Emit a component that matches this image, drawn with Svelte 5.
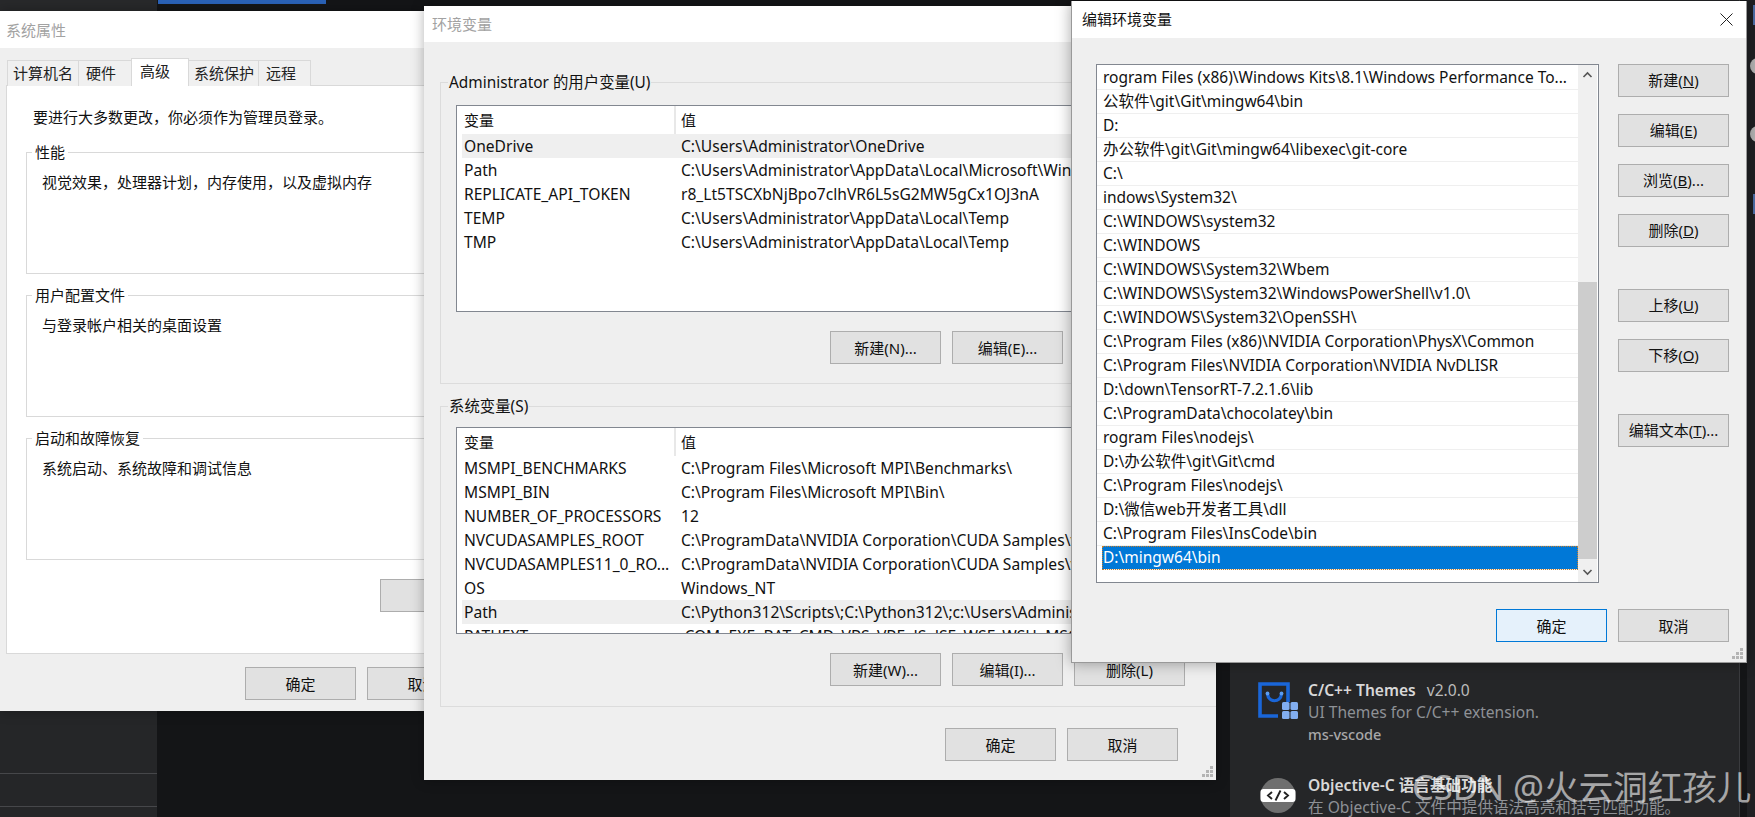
<script>
	const userVars = [
		['OneDrive', 'C:\\Users\\Administrator\\OneDrive', true],
		['Path', 'C:\\Users\\Administrator\\AppData\\Local\\Microsoft\\WindowsApps;C:\\Users'],
		['REPLICATE_API_TOKEN', 'r8_Lt5TSCXbNjBpo7clhVR6L5sG2MW5gCx1OJ3nA'],
		['TEMP', 'C:\\Users\\Administrator\\AppData\\Local\\Temp'],
		['TMP', 'C:\\Users\\Administrator\\AppData\\Local\\Temp']
	];
	const sysVars = [
		['MSMPI_BENCHMARKS', 'C:\\Program Files\\Microsoft MPI\\Benchmarks\\'],
		['MSMPI_BIN', 'C:\\Program Files\\Microsoft MPI\\Bin\\'],
		['NUMBER_OF_PROCESSORS', '12'],
		['NVCUDASAMPLES_ROOT', 'C:\\ProgramData\\NVIDIA Corporation\\CUDA Samples\\v11.0'],
		['NVCUDASAMPLES11_0_RO...', 'C:\\ProgramData\\NVIDIA Corporation\\CUDA Samples\\v11.0'],
		['OS', 'Windows_NT'],
		['Path', 'C:\\Python312\\Scripts\\;C:\\Python312\\;c:\\Users\\Administrator', true],
		['PATHEXT', '.COM;.EXE;.BAT;.CMD;.VBS;.VBE;.JS;.JSE;.WSF;.WSH;.MSC']
	];
	const paths = [
		'rogram Files (x86)\\Windows Kits\\8.1\\Windows Performance To...',
		'公软件\\git\\Git\\mingw64\\bin',
		'D:',
		'办公软件\\git\\Git\\mingw64\\libexec\\git-core',
		'C:\\',
		'indows\\System32\\',
		'C:\\WINDOWS\\system32',
		'C:\\WINDOWS',
		'C:\\WINDOWS\\System32\\Wbem',
		'C:\\WINDOWS\\System32\\WindowsPowerShell\\v1.0\\',
		'C:\\WINDOWS\\System32\\OpenSSH\\',
		'C:\\Program Files (x86)\\NVIDIA Corporation\\PhysX\\Common',
		'C:\\Program Files\\NVIDIA Corporation\\NVIDIA NvDLISR',
		'D:\\down\\TensorRT-7.2.1.6\\lib',
		'C:\\ProgramData\\chocolatey\\bin',
		'rogram Files\\nodejs\\',
		'D:\\办公软件\\git\\Git\\cmd',
		'C:\\Program Files\\nodejs\\',
		'D:\\微信web开发者工具\\dll',
		'C:\\Program Files\\InsCode\\bin',
		'D:\\mingw64\\bin'
	];
	const tabs = ['计算机名', '硬件', '高级', '系统保护', '远程'];
</script>

{#snippet varList(rows)}
	<div class="list">
		<div class="row head"><span class="name">变量</span><span class="val">值</span></div>
		{#each rows as r}
			<div class="row" class:hot={r[2]}><span class="name">{r[0]}</span><span class="val">{r[1]}</span></div>
		{/each}
	</div>
{/snippet}

{#snippet grip()}
	<svg class="grip" width="12" height="12" viewBox="0 0 12 12" fill="#b4b4b4">
		<rect x="8" y="0" width="3" height="3" /><rect x="4" y="4" width="3" height="3" /><rect x="8" y="4" width="3" height="3" />
		<rect x="0" y="8" width="3" height="3" /><rect x="4" y="8" width="3" height="3" /><rect x="8" y="8" width="3" height="3" />
	</svg>
{/snippet}

<div class="desktop">
	<div class="corner"></div>
	<div class="sidebar">
		<div class="side-row"></div>
		<div class="side-row"></div>
	</div>
	<div class="topbar"></div>

	<div class="extensions">
		<div class="ext">
			<svg class="ext-icon" width="40" height="37" viewBox="0 0 40 37">
				<path d="M30 20V2H2v32h18" fill="none" stroke="#1a66d8" stroke-width="3.6" />
				<path d="M9.5 12c1 9 13 9 14 0" fill="none" stroke="#1a66d8" stroke-width="3.2" />
				<circle cx="9.5" cy="11.5" r="1.9" fill="#5b9cf0" /><circle cx="23.5" cy="11.5" r="1.9" fill="#5b9cf0" />
				<rect x="24" y="20" width="7.5" height="8" rx="1.5" fill="#82aef0" /><rect x="32.5" y="20" width="7.5" height="8" rx="1.5" fill="#82aef0" />
				<rect x="24" y="29" width="7.5" height="8" rx="1.5" fill="#82aef0" /><rect x="32.5" y="29" width="7.5" height="8" rx="1.5" fill="#82aef0" />
			</svg>
			<div class="ext-text">
				<div class="ext-title"><b>C/C++ Themes</b><span class="ver">v2.0.0</span></div>
				<div class="ext-desc">UI Themes for C/C++ extension.</div>
				<div class="ext-pub">ms-vscode</div>
			</div>
		</div>
		<div class="ext">
			<svg class="ext-icon" width="40" height="37" viewBox="0 0 40 37">
				<circle cx="20" cy="18.5" r="17.5" fill="#6f6f6f" />
				<rect x="2.5" y="12" width="35" height="13" rx="3" fill="#fff" />
				<path d="M14 15l-4 3.5 4 3.5M26 15l4 3.5-4 3.5M22.5 13.5l-5 10" fill="none" stroke="#222" stroke-width="1.9" />
			</svg>
			<div class="ext-text">
				<div class="ext-title"><b>Objective-C 语言基础功能</b></div>
				<div class="ext-desc">在 Objective-C 文件中提供语法高亮和括号匹配功能。</div>
			</div>
		</div>
	</div>

	<div class="rail">
		<i class="bit"></i>
		<i class="dot"></i>
		<i class="dot"></i>
		<i class="bit"></i>
	</div>

	<section class="win win-props">
		<header class="title dim">系统属性</header>
		<div class="tabs">
			{#each tabs as t, i}
				<div class="tab tab{i}" class:on={i === 2}>{t}</div>
			{/each}
		</div>
		<div class="panel">
			<p class="notice">要进行大多数更改，你必须作为管理员登录。</p>
			<fieldset class="pg pg1"><legend>性能</legend><p>视觉效果，处理器计划，内存使用，以及虚拟内存</p></fieldset>
			<fieldset class="pg pg2"><legend>用户配置文件</legend><p>与登录帐户相关的桌面设置</p></fieldset>
			<fieldset class="pg pg3"><legend>启动和故障恢复</legend><p>系统启动、系统故障和调试信息</p></fieldset>
			<div class="panel-foot"><button class="btn" aria-label="环境变量"></button></div>
		</div>
		<div class="foot"><button class="btn">确定</button><button class="btn">取消</button></div>
	</section>

	<section class="win win-env">
		<header class="title dim">环境变量</header>
		<div class="env-body">
			<fieldset class="eg"><legend>Administrator 的用户变量(U)</legend>
				{@render varList(userVars)}
				<div class="eg-btns"><button class="btn">新建(N)...</button><button class="btn">编辑(E)...</button><button class="btn">删除(D)</button></div>
			</fieldset>
			<fieldset class="eg"><legend>系统变量(S)</legend>
				{@render varList(sysVars)}
				<div class="eg-btns"><button class="btn">新建(W)...</button><button class="btn">编辑(I)...</button><button class="btn">删除(L)</button></div>
			</fieldset>
			<div class="foot env-foot"><button class="btn">确定</button><button class="btn">取消</button></div>
		</div>
		{@render grip()}
	</section>

	<section class="win win-edit">
		<header class="title">编辑环境变量
			<svg class="close" width="13" height="13" viewBox="0 0 13 13"><path d="M.5.5l12 12M12.5.5l-12 12" stroke="#222" stroke-width="1" fill="none" /></svg>
		</header>
		<div class="edit-body">
			<div class="paths">
				<div class="path-rows">
					{#each paths as p, i}
						<div class="path" class:sel={i === paths.length - 1}>{p}</div>
					{/each}
				</div>
				<div class="scroll">
					<svg width="19" height="16" viewBox="0 0 19 16"><path d="M5.5 10l4-4 4 4" fill="none" stroke="#555" stroke-width="1.6" /></svg>
					<div class="track"><div class="thumb"></div></div>
					<svg width="19" height="16" viewBox="0 0 19 16"><path d="M5.5 6l4 4 4-4" fill="none" stroke="#555" stroke-width="1.6" /></svg>
				</div>
			</div>
			<div class="side-btns">
				<button class="btn"><span>新建(<u>N</u>)</span></button>
				<button class="btn"><span>编辑(<u>E</u>)</span></button>
				<button class="btn"><span>浏览(<u>B</u>)...</span></button>
				<button class="btn"><span>删除(<u>D</u>)</span></button>
				<button class="btn gap"><span>上移(<u>U</u>)</span></button>
				<button class="btn"><span>下移(<u>O</u>)</span></button>
				<button class="btn gap"><span>编辑文本(<u>T</u>)...</span></button>
			</div>
		</div>
		<div class="foot edit-foot"><button class="btn primary">确定</button><button class="btn">取消</button></div>
		{@render grip()}
	</section>

	<div class="watermark">CSDN @火云洞红孩儿</div>
</div>

<style>
	:global(body) {
		margin: 0;
		overflow: hidden;
	}

	.desktop {
		position: relative;
		width: 1755px;
		height: 817px;
		overflow: hidden;
		background: #141517;
		font-family: 'Noto Sans', 'Noto Sans CJK SC', sans-serif;
		font-size: 14px;
		color: #111;
	}

	.corner {
		position: absolute;
		left: 0;
		top: 0;
		width: 157px;
		height: 11px;
		background: #28292b;
	}
	.sidebar {
		position: absolute;
		left: 0;
		top: 711px;
		width: 157px;
		height: 106px;
		background: #252628;
	}
	.side-row {
		height: 62px;
		border-bottom: 1px solid #46474a;
	}
	.side-row + .side-row {
		height: 32px;
	}
	.topbar {
		position: absolute;
		left: 158px;
		top: 0;
		width: 168px;
		height: 4px;
		background: #2a62b8;
	}

	.extensions {
		position: absolute;
		left: 1230px;
		top: 0;
		width: 510px;
		height: 817px;
		padding: 679px 0 0 28px;
		box-sizing: border-box;
		background: #252628;
		border-right: 1px solid #3a3b3e;
		color: #ccc;
		font-size: 15.6px;
	}
	.ext {
		display: flex;
		gap: 10px;
		height: 95px;
	}
	.ext-icon {
		flex: none;
		margin-top: 3px;
	}
	.ext-text {
		line-height: 22px;
		white-space: nowrap;
	}
	.ext-title b {
		font-weight: 600;
		color: #d8d8d8;
	}
	.ver {
		margin-left: 11px;
		color: #bbb;
	}
	.ext-desc {
		color: #8e9196;
	}
	.ext-pub {
		color: #a8a8a8;
		font-weight: 500;
		font-size: 14.5px;
	}

	.rail {
		position: absolute;
		left: 1747px;
		top: 0;
		width: 8px;
		height: 817px;
		overflow: hidden;
		background: #1f2023;
		display: flex;
		flex-direction: column;
		padding: 5px 0 0 6px;
		box-sizing: border-box;
	}
	.bit {
		flex: none;
		width: 2px;
		height: 20px;
		margin-bottom: 33px;
		background: #4d6fa8;
	}
	.dot {
		flex: none;
		width: 16px;
		height: 16px;
		margin: 0 0 52px -3px;
		border-radius: 50%;
		background: #b4b4b4;
	}

	.win {
		position: absolute;
		box-sizing: border-box;
		background: #efefef;
		box-shadow: 0 0 12px rgba(0, 0, 0, 0.3);
		overflow: hidden;
		font-size: 15px;
	}
	.title {
		position: relative;
		display: flex;
		align-items: center;
		background: #fff;
		padding-left: 7px;
		font-size: 15px;
		color: #111;
	}
	.title.dim {
		color: #a2a2a2;
	}

	.btn {
		display: block;
		flex: none;
		width: 111px;
		height: 33px;
		padding: 0;
		border: 1px solid #adadad;
		background: #e1e1e1;
		font: inherit;
		color: #111;
		white-space: nowrap;
	}

	.foot {
		display: flex;
		justify-content: flex-end;
		gap: 11px;
	}

	/* system properties */
	.win-props {
		left: 0;
		top: 11px;
		width: 424px;
		height: 700px;
		z-index: 1;
	}
	.win-props .title {
		height: 37px;
		padding-left: 6px;
	}
	.tabs {
		display: flex;
		padding: 10px 0 0 8px;
		height: 28px;
		align-items: flex-end;
		position: relative;
		z-index: 1;
	}
	.tab {
		height: 26px;
		box-sizing: border-box;
		border: 1px solid #d9d9d9;
		border-bottom: none;
		margin-left: -1px;
		padding: 0 0 0 5px;
		line-height: 24px;
		background: #f0f0f0;
		color: #222;
		white-space: nowrap;
	}
	.tab0 { width: 72px; }
	.tab1 { width: 54px; padding-left: 7px; }
	.tab2 { width: 58px; }
	.tab3 { width: 71px; }
	.tab4 { width: 53px; padding-left: 7px; }
	.tab.on {
		height: 28px;
		background: #fff;
		padding-left: 8px;
	}
	.panel {
		margin: -1px 0 0 6px;
		width: 500px;
		height: 569px;
		box-sizing: border-box;
		border: 1px solid #d9d9d9;
		background: #fff;
		padding: 20px 0 0 19px;
	}
	.notice {
		margin: 0 0 0 7px;
		line-height: 22px;
	}
	.pg {
		margin: 11px 0 0;
		padding: 0 0 0 15px;
		border: 1px solid #d9d9d9;
		width: 460px;
		height: 132px;
		box-sizing: border-box;
	}
	.pg legend {
		padding: 0 3px;
		margin-left: -10px;
		line-height: 20px;
	}
	.pg p {
		margin: 9px 0 0;
		line-height: 22px;
	}
	.pg1 { margin-top: 14px; }
	.panel-foot {
		padding: 19px 0 0 354px;
	}
	.win-props .foot {
		margin: 13px 0 0 245px;
		width: 233px;
		justify-content: flex-start;
	}

	/* environment variables */
	.win-env {
		left: 424px;
		top: 6px;
		width: 792px;
		height: 774px;
		z-index: 2;
	}
	.win-env .title {
		height: 36px;
		padding: 0 0 2px 8px;
		box-sizing: border-box;
	}
	.env-body {
		padding: 30px 16px 0 16px;
	}
	.eg {
		margin: 0 0 12px;
		padding: 0 0 0 15px;
		border: 1px solid #dcdcdc;
		height: 312px;
		box-sizing: border-box;
	}
	.eg + .eg {
		height: 311px;
		margin-bottom: 0;
	}
	.eg legend {
		padding: 2px 1px 0;
		margin-left: -8px;
		line-height: 18px;
		font-size: 15.4px;
	}
	.list {
		box-sizing: border-box;
		width: 800px;
		height: 207px;
		margin-top: 13px;
		border: 1px solid #828790;
		background: #fff;
		padding-left: 5px;
		overflow: hidden;
		line-height: 24px;
		white-space: nowrap;
	}
	.eg + .eg .list {
		margin-top: 11px;
	}
	.row {
		display: flex;
		height: 24px;
		font-size: 15.6px;
	}
	.row.head {
		height: 28px;
		line-height: 28px;
		font-size: 15px;
	}
	.row.hot {
		background: #efefef;
	}
	.name {
		flex: none;
		box-sizing: border-box;
		width: 214px;
		padding-left: 2px;
		overflow: hidden;
	}
	.val {
		padding-left: 5px;
	}
	.head .name {
		border-right: 2px solid #e8e8e8;
	}
	.eg-btns {
		display: flex;
		gap: 11px;
		margin: 19px 0 0 374px;
	}
	.env-foot {
		margin-top: 21px;
		padding-right: 23px;
		margin-right: -1px;
	}
	.grip {
		position: absolute;
		right: 2px;
		bottom: 2px;
	}

	/* edit variable */
	.win-edit {
		left: 1071px;
		top: 1px;
		width: 676px;
		height: 662px;
		z-index: 3;
		box-shadow: 0 0 14px rgba(0, 0, 0, 0.35);
		border: 1px solid #999;
		border-top: none;
	}
	.win-edit .title {
		height: 37px;
		padding: 0 0 3px 10px;
		box-sizing: border-box;
	}
	.close {
		position: absolute;
		right: 13px;
		top: 12px;
	}
	.edit-body {
		display: flex;
		padding: 26px 0 0 24px;
		gap: 19px;
	}
	.paths {
		display: flex;
		box-sizing: border-box;
		width: 503px;
		height: 519px;
		border: 1px solid #828790;
		background: #fff;
	}
	.path-rows {
		flex: 1;
		min-width: 0;
		padding-top: 1px;
		white-space: nowrap;
	}
	.path {
		box-sizing: border-box;
		height: 24px;
		line-height: 23px;
		padding-left: 6px;
		border-bottom: 1px solid #efefef;
		font-size: 15.5px;
		overflow: hidden;
	}
	.path.sel {
		background: #0078d7;
		color: #fff;
		margin-left: 5px;
		padding-left: 1px;
		outline: 1px dotted #c77f2a;
		outline-offset: -1px;
	}
	.scroll {
		flex: none;
		width: 19px;
		display: flex;
		flex-direction: column;
		background: #f0f0f0;
		margin-right: 1px;
	}
	.scroll svg {
		flex: none;
		margin: 2px 0;
	}
	.track {
		flex: 1;
		padding-top: 197px;
	}
	.thumb {
		height: 277px;
		background: #cdcdcd;
	}
	.side-btns {
		display: flex;
		flex-direction: column;
		gap: 17px;
	}
	.side-btns .btn {
		padding-bottom: 2px;
	}
	.side-btns .gap {
		margin-top: 25px;
	}
	.edit-foot {
		margin-top: 26px;
		padding-right: 17px;
	}
	.primary {
		border: 1px solid #0078d7;
		background: #e5f1fb;
	}

	.watermark {
		position: absolute;
		left: 1412px;
		top: 764px;
		z-index: 4;
		font-size: 34.5px;
		line-height: 46px;
		font-weight: 400;
		color: rgba(255, 255, 255, 0.6);
		white-space: nowrap;
	}
</style>
